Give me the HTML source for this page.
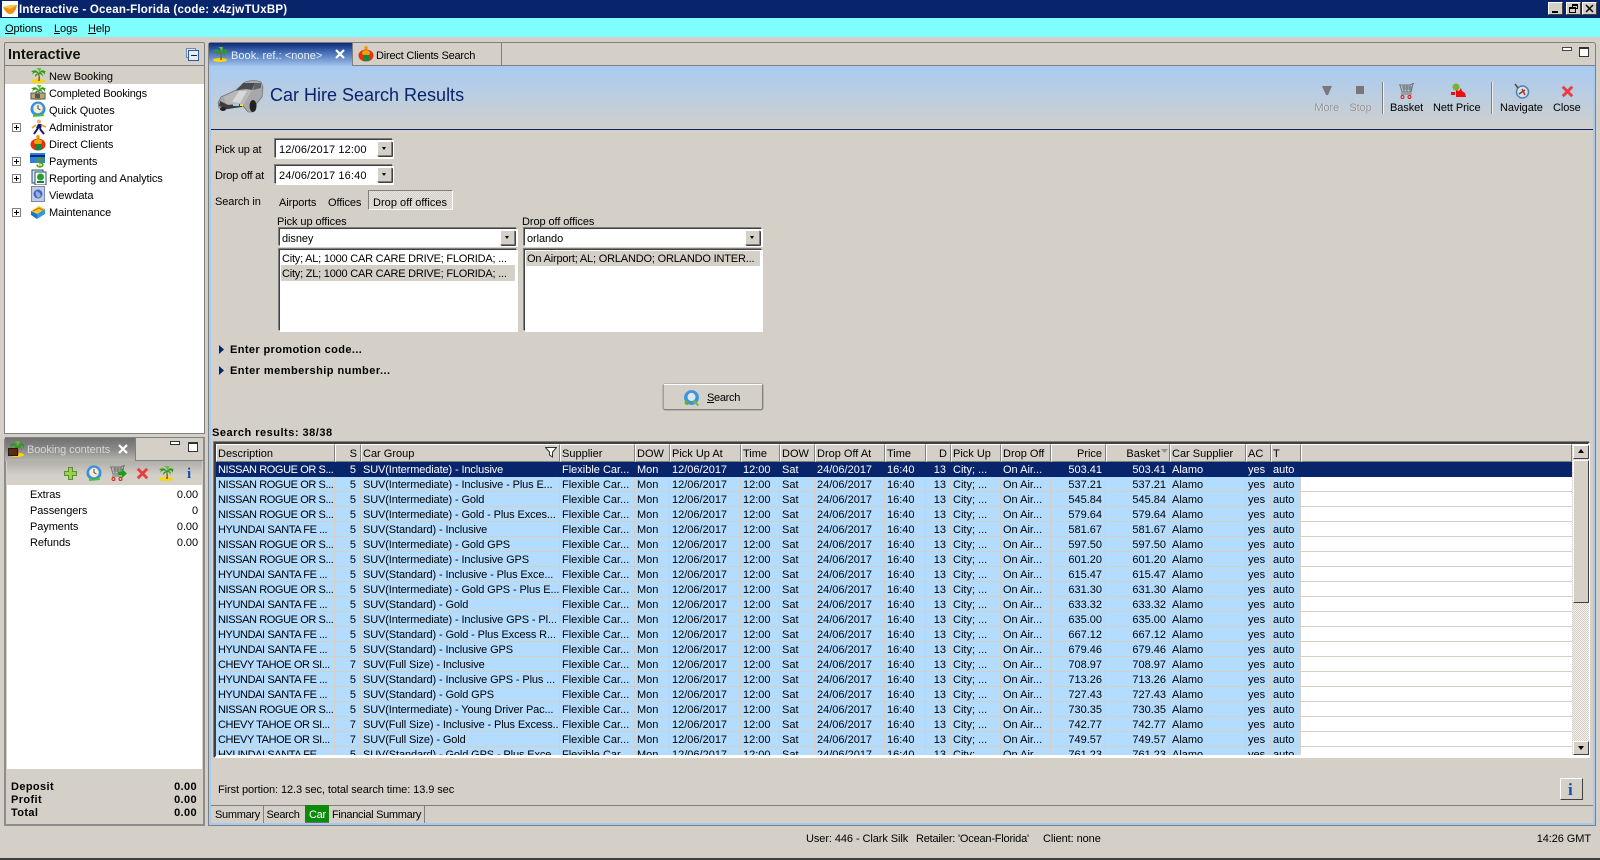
<!DOCTYPE html>
<html><head><meta charset="utf-8"><title>Interactive</title>
<style>
html,body{margin:0;padding:0;width:1600px;height:860px;overflow:hidden;background:#d4d0c8}
body{position:relative;font:11px/14px "Liberation Sans",sans-serif;color:#000;letter-spacing:-.08px}
.a{position:absolute;white-space:nowrap;margin-top:1px}
.bd{font-weight:bold;letter-spacing:.38px}
.b{position:absolute;box-sizing:border-box}
.i{position:absolute;overflow:visible}
.in{position:absolute;box-sizing:border-box;background:#fff;border:1px solid;border-color:#404040 #fff #fff #404040;box-shadow:-1px -1px 0 #808080,1px 1px 0 #fff}
.dd{position:absolute;box-sizing:border-box;width:15px;height:15px;background:#d4d0c8;border:1px solid;border-color:#fff #808080 #808080 #fff;box-shadow:1px 1px 0 #404040;border-radius:1px}
.dd:after{content:"";position:absolute;left:4px;top:5px;border:2.500px solid transparent;border-top:3px solid #000;border-bottom:0}
.h{position:absolute;top:444px;left:216px;height:18px;display:flex;letter-spacing:0}
.h div{box-sizing:border-box;height:18px;border:1px solid;border-color:#fff #808080 #808080 #fff;padding:2px 3px 0 1px;line-height:14px;white-space:nowrap;overflow:hidden;background:#d4d0c8}
.h .r{text-align:right}
table{border-collapse:separate;border-spacing:0;table-layout:fixed;width:1085px;letter-spacing:0}
td{height:15px;box-sizing:border-box;padding:2px 3px 0 2px;border-right:1px solid #d4d0c8;border-bottom:1px solid #d4d0c8;background:#b3dcff;white-space:nowrap;overflow:hidden;line-height:12px;vertical-align:top}
td:nth-child(1){letter-spacing:-.4px;padding-right:0}
td:nth-child(3){letter-spacing:-.12px;padding-right:0}
td:nth-child(2),td:nth-child(11),td:nth-child(14),td:nth-child(15){text-align:right}
td:nth-child(2),td:nth-child(11){padding-right:4px}
.sel td{background:#08246b;color:#fff;border-color:#08246b}
u{text-decoration:underline}
.wb{position:absolute;top:2px;width:15px;height:13px;box-sizing:border-box;background:#d4d0c8;border:1px solid;border-color:#fff #404040 #404040 #fff;text-align:center;font:bold 10px/11px "Liberation Sans",sans-serif}
.tr{position:absolute;left:49px;white-space:nowrap;margin-top:1px}
.pl{position:absolute;left:12px;width:9px;height:9px;box-sizing:border-box;border:1px solid #808080;background:#fff}
.pl:before{content:"";position:absolute;left:1px;top:3px;width:5px;height:1px;background:#000}
.pl:after{content:"";position:absolute;left:3px;top:1px;width:1px;height:5px;background:#000}
</style></head><body>
<svg width="0" height="0" style="position:absolute">
<defs>
<symbol id="palm" viewBox="0 0 16 16"><ellipse cx="8" cy="14" rx="7" ry="2" fill="#f8d800"/><path d="M8 6Q9 10 8 14H9.800Q10.500 10 9 6Z" fill="#a05a18"/><path d="M9 6Q5 1 1 5L3 5 2 8Q5 4 8 6.500 5 6 5 10 8 7 9 7 12 7 13 10 13 6 10.500 6 13 4 15 8L15 5 16 5Q12 1 9 6Z" fill="#2f9a1a"/><path d="M9 6Q9 2 6 1L11 1Q11 3 9 6Z" fill="#5cc030"/></symbol>
<symbol id="clock" viewBox="0 0 16 16"><circle cx="8" cy="8" r="7.500" fill="#2a90ee"/><circle cx="8" cy="7.500" r="5" fill="#f2efe2" stroke="#9a9a90" stroke-width=".7"/><path d="M8 4V7.500L10.500 9" fill="none" stroke="#444" stroke-width="1"/><path d="M3 12Q8 16 13 12L14 15 3 16Z" fill="#48c030"/></symbol>
<symbol id="money" viewBox="0 0 16 16"><rect x="1" y="9" width="14" height="6" fill="#b8a878" stroke="#555"/><rect x="5" y="10" width="5" height="4" fill="#555"/></symbol>
<symbol id="run" viewBox="0 0 16 16"><circle cx="8" cy="2.500" r="2" fill="#e8b070"/><path d="M7 5L11 5 10 10 5 9Z" fill="#18186e"/><path d="M7 9L3 15M9 10L13 15" stroke="#18186e" stroke-width="2"/><path d="M5 6L1 9M10 6L15 8" stroke="#d8a020" stroke-width="1.500"/></symbol>
<symbol id="client" viewBox="0 0 16 16"><circle cx="8" cy="1.800" r="1.800" fill="#f0a000"/><ellipse cx="8" cy="9.500" rx="7.500" ry="6" fill="#e8300c"/><ellipse cx="8" cy="7" rx="4" ry="3" fill="#f0a010"/><rect x="5" y="9" width="6" height="6" fill="#0f8a40"/></symbol>
<symbol id="pay" viewBox="0 0 16 16"><rect x="0" y="1" width="15" height="10" fill="#2c80e0"/><rect x="0" y="3" width="15" height="2" fill="#0b2a6a"/><text x="6" y="15.500" font-family="Liberation Sans,sans-serif" font-size="14" font-weight="bold" fill="#5a9c1c">$</text></symbol>
<symbol id="rep" viewBox="0 0 16 16"><rect x="1" y="1" width="11" height="13" fill="#dfe4f0" stroke="#28506a"/><rect x="4" y="3" width="11" height="13" fill="#fff" stroke="#28506a"/><circle cx="9.500" cy="8" r="3.500" fill="#20a030"/><rect x="6" y="12" width="7" height="2" fill="#1c7a50"/></symbol>
<symbol id="view" viewBox="0 0 16 16"><rect x="1.500" y=".5" width="13" height="15" fill="#c4cce0" stroke="#7a8aa8"/><circle cx="8" cy="8" r="4.500" fill="#3a68c8"/><path d="M6 5Q10 6 11 10L8 12Q5 9 6 5Z" fill="#a0a8e0"/></symbol>
<symbol id="maint" viewBox="0 0 16 16"><path d="M1 7L9 2 15 5 7 10Z" fill="#f8c820"/><path d="M1 7V11L7 15 7 10Z" fill="#1c70c8"/><path d="M7 10V15L15 10V5Z" fill="#3098e0"/><path d="M3 7L9 4 13 6" fill="none" stroke="#c07010"/></symbol>
<symbol id="cart" viewBox="0 0 16 16"><path d="M0 2H11L15 0M1 2L3 9H12L14 1M3 4H13M3.500 6H13M5 2V9M8 2V9M11 2V9" fill="none" stroke="#707070"/><path d="M2 11H13" stroke="#707070"/><circle cx="3.500" cy="14" r="1.500" fill="none" stroke="#e01818"/><circle cx="10.500" cy="14" r="1.500" fill="none" stroke="#e01818"/></symbol>
<symbol id="redx" viewBox="0 0 14 14"><path d="M1 3L3 1 7 5 11 1 13 3 9 7 13 11 11 13 7 9 3 13 1 11 5 7Z" fill="#ee3b3b" stroke="#c86060" stroke-width=".5"/></symbol>
<symbol id="globe" viewBox="0 0 16 16"><circle cx="8" cy="8" r="7" fill="#2f9ae8"/><circle cx="8" cy="7.500" r="4.200" fill="#d8e8f0" stroke="#708090" stroke-width=".8"/><path d="M10 11L14.500 15.500" stroke="#90b030" stroke-width="2"/><circle cx="3.500" cy="13" r="2" fill="#60b030"/></symbol>
</defs>
</svg>

<!-- Title bar -->
<div class="b" style="left:0;top:0;width:1600px;height:18px;background:#08246b"></div>
<div class="b" style="left:2px;top:1px;width:16px;height:16px;background:#fff"></div>
<svg class="i" style="left:2px;top:2px" width="16" height="14" viewBox="0 0 16 14"><path d="M1 5L15 3 14 7Q11 13 7 12 3 10 1 5Z" fill="#f09010"/><path d="M1 5L8 3 15 3 8 7Z" fill="#f8c850"/></svg>
<div class="a" style="left:19px;top:2px;color:#fff;font-weight:bold;font-size:11.500px;letter-spacing:.22px">Interactive - Ocean-Florida (code: x4zjwTUxBP)</div>
<div class="wb" style="left:1548px"><div style="position:absolute;left:3px;top:8px;width:6px;height:2px;background:#000"></div></div>
<div class="wb" style="left:1566px"><div style="position:absolute;left:5px;top:1px;width:6px;height:5px;border:1px solid #000;border-top-width:2px;box-sizing:border-box"></div><div style="position:absolute;left:2px;top:4px;width:7px;height:6px;border:1px solid #000;border-top-width:2px;box-sizing:border-box;background:#d4d0c8"></div></div>
<div class="wb" style="left:1582px"><svg style="position:absolute;left:2px;top:1px" width="9" height="9"><path d="M1 1L8 8M8 1L1 8" stroke="#000" stroke-width="1.500"/></svg></div>

<!-- Menu -->
<div class="b" style="left:0;top:18px;width:1600px;height:19px;background:#80ffff"></div>
<div class="a" style="left:5px;top:21px"><u>O</u>ptions</div>
<div class="a" style="left:54px;top:21px"><u>L</u>ogs</div>
<div class="a" style="left:88px;top:21px"><u>H</u>elp</div>

<!-- Left top panel -->
<div class="b" style="left:4px;top:42px;width:201px;height:392px;border:1px solid #808080;border-radius:2px 2px 0 0;box-shadow:inset 1px 1px 0 #d4d0c8"></div>
<div class="a" style="left:8px;top:46px;font-size:14.500px;line-height:16px;font-weight:bold;color:#111;letter-spacing:0">Interactive</div>
<div class="b" style="left:186px;top:48px;width:10px;height:10px;border:1px solid #6a8ab0;background:#e8e8f0"></div>
<div class="b" style="left:188px;top:50px;width:11px;height:11px;border:1px solid #2a5a98;background:#e8eef8"><div style="position:absolute;left:2px;top:4px;width:6px;height:1px;background:#123;"></div></div>
<div class="b" style="left:5px;top:65px;width:199px;height:1px;background:#808080"></div>
<div class="b" style="left:5px;top:67px;width:199px;height:366px;background:#fff"></div>
<div class="b" style="left:5px;top:67px;width:199px;height:17px;background:#d4d0c8"></div>
<svg class="i" style="left:30px;top:67px" width="16" height="16"><use href="#palm"/></svg>
<svg class="i" style="left:30px;top:84px" width="16" height="16"><use href="#palm"/></svg>
<svg class="i" style="left:30px;top:84px" width="16" height="16"><use href="#money"/></svg>
<svg class="i" style="left:30px;top:101px" width="16" height="16"><use href="#clock"/></svg>
<svg class="i" style="left:31px;top:119px" width="16" height="16"><use href="#run"/></svg>
<svg class="i" style="left:30px;top:135px" width="16" height="16"><use href="#client"/></svg>
<svg class="i" style="left:30px;top:152px" width="16" height="16"><use href="#pay"/></svg>
<svg class="i" style="left:31px;top:169px" width="16" height="16"><use href="#rep"/></svg>
<svg class="i" style="left:30px;top:186px" width="16" height="16"><use href="#view"/></svg>
<svg class="i" style="left:30px;top:204px" width="16" height="16"><use href="#maint"/></svg>
<div class="tr" style="top:69px">New Booking</div>
<div class="tr" style="top:86px;letter-spacing:-.2px">Completed Bookings</div>
<div class="tr" style="top:103px">Quick Quotes</div>
<div class="tr" style="top:120px">Administrator</div>
<div class="tr" style="top:137px">Direct Clients</div>
<div class="tr" style="top:154px">Payments</div>
<div class="tr" style="top:171px">Reporting and Analytics</div>
<div class="tr" style="top:188px">Viewdata</div>
<div class="tr" style="top:205px">Maintenance</div>
<div class="pl" style="top:123px"></div>
<div class="pl" style="top:157px"></div>
<div class="pl" style="top:174px"></div>
<div class="pl" style="top:208px"></div>

<!-- Booking contents panel -->
<div class="b" style="left:4px;top:437px;width:201px;height:389px;border:1px solid #808080;border-radius:3px 3px 0 0;border-width:0 2px 2px 2px;border-color:#8c8c8c"></div>
<div class="b" style="left:5px;top:437px;width:200px;height:1px;background:#808080"></div>
<div class="b" style="left:5px;top:438px;width:131px;height:23px;background:linear-gradient(#707070,#8a8a8a 50%,#b8b6b0);border-right:1px solid #808080"></div>
<div class="b" style="left:136px;top:460px;width:68px;height:1px;background:#808080"></div>
<svg class="i" style="left:8px;top:440px" width="17" height="17"><use href="#palm"/></svg>
<div class="b" style="left:8px;top:448px;width:10px;height:8px;background:#5a2a18;border:1px solid #301808"></div>
<div class="a" style="left:27px;top:442px;color:#d8d8d8">Booking contents</div>
<svg class="i" style="left:118px;top:444px" width="10" height="10"><path d="M1 1L9 9M9 1L1 9" stroke="#fff" stroke-width="2.200"/></svg>
<div class="b" style="left:170px;top:441px;width:10px;height:4px;border:1px solid #333;background:#fff"></div>
<div class="b" style="left:188px;top:442px;width:10px;height:10px;border:1px solid #333;border-top-width:2px;background:#fff"></div>
<div class="b" style="left:7px;top:461px;width:195px;height:24px;background:linear-gradient(#b0aeaa,#d4d0c8 60%)"></div>
<svg class="i" style="left:64px;top:467px" width="13" height="13"><path d="M4.500.5H8.500V4.500H12.500V8.500H8.500V12.500H4.500V8.500H.5V4.500H4.500Z" fill="#9cd048" stroke="#5a8e30"/></svg>
<svg class="i" style="left:86px;top:465px" width="16" height="16"><use href="#clock"/></svg>
<svg class="i" style="left:110px;top:465px" width="16" height="16"><use href="#cart"/></svg>
<svg class="i" style="left:118px;top:469px" width="9" height="9"><path d="M0 3H4V0L9 4.500 4 9V6H0Z" fill="#18a018"/></svg>
<svg class="i" style="left:136px;top:467px" width="13" height="13"><use href="#redx"/></svg>
<svg class="i" style="left:158px;top:465px" width="16" height="16"><use href="#palm"/></svg>
<div class="a" style="left:187px;top:465px;font:bold 15px/16px 'Liberation Serif',serif;color:#1050b0">i</div>
<div class="b" style="left:7px;top:485px;width:195px;height:284px;background:#fff"></div>
<div class="a" style="left:30px;top:487px">Extras</div><div class="a" style="right:1402px;top:487px">0.00</div>
<div class="a" style="left:30px;top:503px">Passengers</div><div class="a" style="right:1402px;top:503px">0</div>
<div class="a" style="left:30px;top:519px">Payments</div><div class="a" style="right:1402px;top:519px">0.00</div>
<div class="a" style="left:30px;top:535px">Refunds</div><div class="a" style="right:1402px;top:535px">0.00</div>
<div class="a bd" style="left:11px;top:779px">Deposit</div><div class="a bd" style="right:1403px;top:779px">0.00</div>
<div class="a bd" style="left:11px;top:792px">Profit</div><div class="a bd" style="right:1403px;top:792px">0.00</div>
<div class="a bd" style="left:11px;top:805px">Total</div><div class="a bd" style="right:1403px;top:805px">0.00</div>

<!-- Main panel -->
<div class="b" style="left:208px;top:42px;width:1388px;height:784px;border:1px solid #808080;border-radius:3px 3px 0 0"></div>
<div class="b" style="left:209px;top:65px;width:1386px;height:760px;border:2px solid #a6caf0;border-top:0"></div>
<div class="b" style="left:209px;top:65px;width:1386px;height:1px;background:#808080"></div>
<div class="b" style="left:209px;top:43px;width:143px;height:24px;background:linear-gradient(#0a2a78,#3f68b0 35%,#a8c8f0)"></div>
<div class="b" style="left:352px;top:43px;width:1px;height:22px;background:#808080"></div>
<div class="b" style="left:501px;top:43px;width:1px;height:22px;background:#808080"></div>
<svg class="i" style="left:212px;top:46px" width="16" height="16"><use href="#palm"/></svg>
<div class="a" style="left:231px;top:48px;color:#e8f0fa;letter-spacing:.05px">Book. ref.: &lt;none&gt;</div>
<svg class="i" style="left:335px;top:49px" width="10" height="10"><path d="M1 1L9 9M9 1L1 9" stroke="#fff" stroke-width="2.200"/></svg>
<svg class="i" style="left:358px;top:46px" width="16" height="16"><use href="#client"/></svg>
<div class="a" style="left:376px;top:48px;letter-spacing:-.2px">Direct Clients Search</div>
<div class="b" style="left:1562px;top:47px;width:10px;height:4px;border:1px solid #444;background:#fff"></div>
<div class="b" style="left:1579px;top:47px;width:10px;height:10px;border:1px solid #333;border-top-width:2px;background:#fff"></div>

<!-- Header band -->
<div class="b" style="left:211px;top:66px;width:1382px;height:63px;background:linear-gradient(#a8cbf3,#d0d0cc)"></div>
<div class="b" style="left:211px;top:129px;width:1382px;height:1px;background:#08246b"></div>
<svg class="i" style="left:216px;top:79px" width="50" height="36" viewBox="0 0 50 36"><path d="M2 24L5 18 20 11 29 3Q38 0 45 3L47 8 46 18 41 24 37 33 32 33 27 27 11 30 3 29Z" fill="#a8a8a8" stroke="#606060" stroke-width=".6"/><path d="M20 12L27 4 39 4 36 11Q28 9 20 12Z" fill="#4a4a50"/><path d="M39 4L45 4 45 9 37 11Z" fill="#606068"/><path d="M7 18L20 12Q29 9 36 11L28 25 11 25Z" fill="#b8b8b8"/><path d="M16 23L23 12 31 12 24 24Z" fill="#d8d8d8"/><path d="M4 22L12 26 26 25 26 28 11 30 3 27Z" fill="#3c3c3c"/><rect x="17" y="25" width="6" height="2" fill="#9cd0f0"/><rect x="24" y="25" width="3" height="2" fill="#e8e040"/><ellipse cx="37" cy="27" rx="3.500" ry="6" fill="#222"/><ellipse cx="7" cy="30" rx="3" ry="2" fill="#222"/></svg>
<div class="a" style="left:270px;top:83px;font-size:18px;line-height:22px;color:#08246b;letter-spacing:0">Car Hire Search Results</div>
<svg class="i" style="left:1322px;top:85px" width="11" height="10"><path d="M0 1H10L6 10H4Z" fill="#787878"/></svg>
<div class="b" style="left:1356px;top:86px;width:8px;height:8px;background:#787878"></div>
<div class="a" style="left:1315px;top:100px;color:#fff">More</div><div class="a" style="left:1314.500px;top:99.500px;color:#8c8c8c">More</div>
<div class="a" style="left:1350px;top:100px;color:#fff">Stop</div><div class="a" style="left:1349.500px;top:99.500px;color:#8c8c8c">Stop</div>
<div class="b" style="left:1382px;top:82px;width:1px;height:32px;background:#808080;box-shadow:1px 0 0 #eee"></div>
<div class="b" style="left:1491px;top:82px;width:1px;height:32px;background:#808080;box-shadow:1px 0 0 #eee"></div>
<svg class="i" style="left:1399px;top:83px" width="16" height="16"><use href="#cart"/></svg>
<div class="a" style="left:1390px;top:100px">Basket</div>
<svg class="i" style="left:1450px;top:83px" width="17" height="16" viewBox="0 0 17 16"><circle cx="6" cy="4" r="3.500" fill="#7cb030"/><path d="M1 9H5V12H1ZM6 7L9 8 11 5 12 8 15 10 16 14H6Z" fill="#e81010"/></svg>
<div class="a" style="left:1433px;top:100px">Nett Price</div>
<svg class="i" style="left:1514px;top:83px" width="16" height="16"><circle cx="8.500" cy="9" r="6" fill="#d0e4f0" stroke="#5080b0" stroke-width="1.500"/><path d="M1 1L4 5M5 11L11 7" stroke="#704020" stroke-width="1.500"/><path d="M8 6L11 12" stroke="#e02020" stroke-width="1.500"/></svg>
<div class="a" style="left:1500px;top:100px">Navigate</div>
<svg class="i" style="left:1561px;top:85px" width="13" height="13"><use href="#redx"/></svg>
<div class="a" style="left:1553px;top:100px">Close</div>

<!-- Form -->
<div class="a" style="left:215px;top:142px;letter-spacing:-.2px">Pick up at</div>
<div class="in" style="left:275px;top:139px;width:118px;height:19px"></div>
<div class="a" style="left:279px;top:142px;letter-spacing:.12px">12/06/2017 12:00</div>
<div class="dd" style="left:377px;top:141px"></div>
<div class="a" style="left:215px;top:168px;letter-spacing:-.2px">Drop off at</div>
<div class="in" style="left:275px;top:165px;width:118px;height:19px"></div>
<div class="a" style="left:279px;top:168px;letter-spacing:.12px">24/06/2017 16:40</div>
<div class="dd" style="left:377px;top:167px"></div>
<div class="a" style="left:215px;top:194px">Search in</div>
<div class="a" style="left:279px;top:195px">Airports</div>
<div class="a" style="left:328px;top:195px;letter-spacing:-.1px">Offices</div>
<div class="b" style="left:368px;top:190px;width:85px;height:20px;border:1px solid;border-color:#808080 #fff #fff #808080;background:repeating-conic-gradient(#d4d0c8 0 25%,#e6e3dd 0 50%) 0 0/2px 2px"></div>
<div class="a" style="left:373px;top:195px;letter-spacing:.03px">Drop off offices</div>
<div class="a" style="left:277px;top:214px">Pick up offices</div>
<div class="a" style="left:522px;top:214px">Drop off offices</div>
<div class="in" style="left:279px;top:228px;width:238px;height:18px;border-width:1px"></div>
<div class="a" style="left:282px;top:231px">disney</div>
<div class="dd" style="left:500px;top:230px"></div>
<div class="in" style="left:524px;top:228px;width:238px;height:18px"></div>
<div class="a" style="left:527px;top:231px">orlando</div>
<div class="dd" style="left:745px;top:230px"></div>
<div class="in" style="left:279px;top:249px;width:238px;height:82px"></div>
<div class="b" style="left:281px;top:265px;width:234px;height:16px;background:#d4d0c8"></div>
<div class="a" style="left:282px;top:251px;letter-spacing:-.22px">City; AL; 1000 CAR CARE DRIVE; FLORIDA; ...</div>
<div class="a" style="left:282px;top:266px;letter-spacing:-.22px">City; ZL; 1000 CAR CARE DRIVE; FLORIDA; ...</div>
<div class="in" style="left:524px;top:249px;width:238px;height:82px"></div>
<div class="b" style="left:526px;top:251px;width:234px;height:15px;background:#d4d0c8"></div>
<div class="a" style="left:527px;top:251px;letter-spacing:-.18px">On Airport; AL; ORLANDO; ORLANDO INTER...</div>
<svg class="i" style="left:219px;top:345px" width="5" height="9"><path d="M0 0L5 4.500 0 9Z" fill="#08246b"/></svg>
<div class="a bd" style="left:230px;top:342px">Enter promotion code...</div>
<svg class="i" style="left:219px;top:366px" width="5" height="9"><path d="M0 0L5 4.500 0 9Z" fill="#08246b"/></svg>
<div class="a bd" style="left:230px;top:363px;letter-spacing:.46px">Enter membership number...</div>
<div class="b" style="left:663px;top:384px;width:100px;height:26px;border:1px solid;border-color:#fff #808080 #808080 #a0a0a0;background:#d4d0c8;border-radius:2px;box-shadow:0 0 0 .5px #9a9a9a"></div>
<svg class="i" style="left:683px;top:389px" width="17" height="17"><use href="#globe"/></svg>
<div class="a" style="left:707px;top:390px;letter-spacing:-.3px"><u>S</u>earch</div>
<div class="a bd" style="left:212px;top:425px;letter-spacing:.5px">Search results: 38/38</div>

<!-- Grid -->
<div class="b" style="left:214px;top:442px;width:1376px;height:316px;border:2px solid;border-color:#404040 #fff #fff #404040;background:#fff;box-shadow:-1px -1px 0 #808080"></div>
<div class="h">
<div style="width:119px">Description</div><div class="r" style="width:26px">S</div><div style="width:199px;position:relative">Car Group<svg style="position:absolute;right:2px;top:2px" width="12" height="11"><path d="M.5.5H11.500L7.500 5V10L4.500 8V5Z" fill="#fff" stroke="#333"/></svg></div><div style="width:75px">Supplier</div><div style="width:35px">DOW</div><div style="width:71px">Pick Up At</div><div style="width:39px">Time</div><div style="width:35px">DOW</div><div style="width:70px">Drop Off At</div><div style="width:41px">Time</div><div class="r" style="width:25px">D</div><div style="width:50px">Pick Up</div><div style="width:50px">Drop Off</div><div class="r" style="width:55px">Price</div><div class="r" style="width:64px;padding-right:9px;position:relative">Basket<svg style="position:absolute;right:1px;top:4px" width="7" height="5"><path d="M0 0H7L3.500 4Z" fill="#909090"/></svg></div><div style="width:76px">Car Supplier</div><div style="width:25px">AC</div><div style="width:30px">T</div><div style="width:271px"></div>
</div>
<div class="b" style="left:216px;top:462px;width:1356px;height:293px;overflow:hidden;background:repeating-linear-gradient(#fff 0 14px,#d4d0c8 14px 15px)">
<div class="b" style="left:0;top:0;width:1356px;height:15px;background:#08246b"></div>
<table style="position:relative"><colgroup><col style="width:119px"><col style="width:26px"><col style="width:199px"><col style="width:75px"><col style="width:35px"><col style="width:71px"><col style="width:39px"><col style="width:35px"><col style="width:70px"><col style="width:41px"><col style="width:25px"><col style="width:50px"><col style="width:50px"><col style="width:55px"><col style="width:64px"><col style="width:76px"><col style="width:25px"><col style="width:30px"></colgroup>
<tr class="sel"><td>NISSAN ROGUE OR S...<td>5<td>SUV(Intermediate) - Inclusive<td>Flexible Car...<td>Mon<td>12/06/2017<td>12:00<td>Sat<td>24/06/2017<td>16:40<td>13<td>City; ...<td>On Air...<td>503.41<td>503.41<td>Alamo<td>yes<td>auto
<tr><td>NISSAN ROGUE OR S...<td>5<td>SUV(Intermediate) - Inclusive - Plus E...<td>Flexible Car...<td>Mon<td>12/06/2017<td>12:00<td>Sat<td>24/06/2017<td>16:40<td>13<td>City; ...<td>On Air...<td>537.21<td>537.21<td>Alamo<td>yes<td>auto
<tr><td>NISSAN ROGUE OR S...<td>5<td>SUV(Intermediate) - Gold<td>Flexible Car...<td>Mon<td>12/06/2017<td>12:00<td>Sat<td>24/06/2017<td>16:40<td>13<td>City; ...<td>On Air...<td>545.84<td>545.84<td>Alamo<td>yes<td>auto
<tr><td>NISSAN ROGUE OR S...<td>5<td>SUV(Intermediate) - Gold - Plus Exces...<td>Flexible Car...<td>Mon<td>12/06/2017<td>12:00<td>Sat<td>24/06/2017<td>16:40<td>13<td>City; ...<td>On Air...<td>579.64<td>579.64<td>Alamo<td>yes<td>auto
<tr><td>HYUNDAI SANTA FE ...<td>5<td>SUV(Standard) - Inclusive<td>Flexible Car...<td>Mon<td>12/06/2017<td>12:00<td>Sat<td>24/06/2017<td>16:40<td>13<td>City; ...<td>On Air...<td>581.67<td>581.67<td>Alamo<td>yes<td>auto
<tr><td>NISSAN ROGUE OR S...<td>5<td>SUV(Intermediate) - Gold GPS<td>Flexible Car...<td>Mon<td>12/06/2017<td>12:00<td>Sat<td>24/06/2017<td>16:40<td>13<td>City; ...<td>On Air...<td>597.50<td>597.50<td>Alamo<td>yes<td>auto
<tr><td>NISSAN ROGUE OR S...<td>5<td>SUV(Intermediate) - Inclusive GPS<td>Flexible Car...<td>Mon<td>12/06/2017<td>12:00<td>Sat<td>24/06/2017<td>16:40<td>13<td>City; ...<td>On Air...<td>601.20<td>601.20<td>Alamo<td>yes<td>auto
<tr><td>HYUNDAI SANTA FE ...<td>5<td>SUV(Standard) - Inclusive - Plus Exce...<td>Flexible Car...<td>Mon<td>12/06/2017<td>12:00<td>Sat<td>24/06/2017<td>16:40<td>13<td>City; ...<td>On Air...<td>615.47<td>615.47<td>Alamo<td>yes<td>auto
<tr><td>NISSAN ROGUE OR S...<td>5<td>SUV(Intermediate) - Gold GPS - Plus E...<td>Flexible Car...<td>Mon<td>12/06/2017<td>12:00<td>Sat<td>24/06/2017<td>16:40<td>13<td>City; ...<td>On Air...<td>631.30<td>631.30<td>Alamo<td>yes<td>auto
<tr><td>HYUNDAI SANTA FE ...<td>5<td>SUV(Standard) - Gold<td>Flexible Car...<td>Mon<td>12/06/2017<td>12:00<td>Sat<td>24/06/2017<td>16:40<td>13<td>City; ...<td>On Air...<td>633.32<td>633.32<td>Alamo<td>yes<td>auto
<tr><td>NISSAN ROGUE OR S...<td>5<td>SUV(Intermediate) - Inclusive GPS - Pl...<td>Flexible Car...<td>Mon<td>12/06/2017<td>12:00<td>Sat<td>24/06/2017<td>16:40<td>13<td>City; ...<td>On Air...<td>635.00<td>635.00<td>Alamo<td>yes<td>auto
<tr><td>HYUNDAI SANTA FE ...<td>5<td>SUV(Standard) - Gold - Plus Excess R...<td>Flexible Car...<td>Mon<td>12/06/2017<td>12:00<td>Sat<td>24/06/2017<td>16:40<td>13<td>City; ...<td>On Air...<td>667.12<td>667.12<td>Alamo<td>yes<td>auto
<tr><td>HYUNDAI SANTA FE ...<td>5<td>SUV(Standard) - Inclusive GPS<td>Flexible Car...<td>Mon<td>12/06/2017<td>12:00<td>Sat<td>24/06/2017<td>16:40<td>13<td>City; ...<td>On Air...<td>679.46<td>679.46<td>Alamo<td>yes<td>auto
<tr><td>CHEVY TAHOE OR SI...<td>7<td>SUV(Full Size) - Inclusive<td>Flexible Car...<td>Mon<td>12/06/2017<td>12:00<td>Sat<td>24/06/2017<td>16:40<td>13<td>City; ...<td>On Air...<td>708.97<td>708.97<td>Alamo<td>yes<td>auto
<tr><td>HYUNDAI SANTA FE ...<td>5<td>SUV(Standard) - Inclusive GPS - Plus ...<td>Flexible Car...<td>Mon<td>12/06/2017<td>12:00<td>Sat<td>24/06/2017<td>16:40<td>13<td>City; ...<td>On Air...<td>713.26<td>713.26<td>Alamo<td>yes<td>auto
<tr><td>HYUNDAI SANTA FE ...<td>5<td>SUV(Standard) - Gold GPS<td>Flexible Car...<td>Mon<td>12/06/2017<td>12:00<td>Sat<td>24/06/2017<td>16:40<td>13<td>City; ...<td>On Air...<td>727.43<td>727.43<td>Alamo<td>yes<td>auto
<tr><td>NISSAN ROGUE OR S...<td>5<td>SUV(Intermediate) - Young Driver Pac...<td>Flexible Car...<td>Mon<td>12/06/2017<td>12:00<td>Sat<td>24/06/2017<td>16:40<td>13<td>City; ...<td>On Air...<td>730.35<td>730.35<td>Alamo<td>yes<td>auto
<tr><td>CHEVY TAHOE OR SI...<td>7<td>SUV(Full Size) - Inclusive - Plus Excess...<td>Flexible Car...<td>Mon<td>12/06/2017<td>12:00<td>Sat<td>24/06/2017<td>16:40<td>13<td>City; ...<td>On Air...<td>742.77<td>742.77<td>Alamo<td>yes<td>auto
<tr><td>CHEVY TAHOE OR SI...<td>7<td>SUV(Full Size) - Gold<td>Flexible Car...<td>Mon<td>12/06/2017<td>12:00<td>Sat<td>24/06/2017<td>16:40<td>13<td>City; ...<td>On Air...<td>749.57<td>749.57<td>Alamo<td>yes<td>auto
<tr><td>HYUNDAI SANTA FE ...<td>5<td>SUV(Standard) - Gold GPS - Plus Exce...<td>Flexible Car...<td>Mon<td>12/06/2017<td>12:00<td>Sat<td>24/06/2017<td>16:40<td>13<td>City; ...<td>On Air...<td>761.23<td>761.23<td>Alamo<td>yes<td>auto
</table>
</div>
<!-- Scrollbar -->
<div class="b" style="left:1572px;top:445px;width:17px;height:310px;background:repeating-conic-gradient(#d4d0c8 0 25%,#f2f0ec 0 50%) 0 0/2px 2px"></div>
<div class="b" style="left:1573px;top:445px;width:16px;height:14px;background:#d4d0c8;border:1px solid;border-color:#fff #404040 #404040 #fff"><div style="position:absolute;left:4px;top:3px;border:3.500px solid transparent;border-bottom:4px solid #000;border-top:0"></div></div>
<div class="b" style="left:1573px;top:460px;width:16px;height:143px;background:#d4d0c8;border:1px solid;border-color:#fff #404040 #404040 #fff"></div>
<div class="b" style="left:1573px;top:741px;width:16px;height:14px;background:#d4d0c8;border:1px solid;border-color:#fff #404040 #404040 #fff"><div style="position:absolute;left:4px;top:4px;border:3.500px solid transparent;border-top:4px solid #000;border-bottom:0"></div></div>

<!-- Bottom -->
<div class="a" style="left:218px;top:782px">First portion: 12.3 sec, total search time: 13.9 sec</div>
<div class="b" style="left:1560px;top:778px;width:23px;height:22px;background:#d4d0c8;border:1px solid;border-color:#fff #404040 #404040 #fff"></div>
<div class="a" style="left:1568px;top:780px;font:bold 17px/18px 'Liberation Serif',serif;color:#1050b0">i</div>
<div class="b" style="left:211px;top:805px;width:1382px;height:1px;background:#808080"></div>
<div class="b" style="left:263px;top:806px;width:1px;height:17px;background:#808080"></div>
<div class="b" style="left:424px;top:806px;width:1px;height:17px;background:#808080"></div>
<div class="b" style="left:305px;top:805px;width:24px;height:18px;background:#0b8a0b;border-bottom:1px solid #707070"></div>
<div class="a" style="left:215px;top:807px;letter-spacing:-.3px">Summary</div>
<div class="a" style="left:266.500px;top:807px;letter-spacing:-.3px">Search</div>
<div class="a" style="left:309px;top:807px;color:#fff;letter-spacing:-.3px">Car</div>
<div class="a" style="left:332px;top:807px;letter-spacing:-.3px">Financial Summary</div>

<!-- Status -->
<div class="a" style="left:806px;top:831px">User: 446 - Clark Silk</div>
<div class="a" style="left:916px;top:831px;letter-spacing:-.2px">Retailer: 'Ocean-Florida'</div>
<div class="a" style="left:1043px;top:831px">Client: none</div>
<div class="a" style="right:9px;top:831px">14:26 GMT</div>
<div class="b" style="left:0;top:858px;width:1600px;height:2px;background:#404040"></div>
</body></html>
